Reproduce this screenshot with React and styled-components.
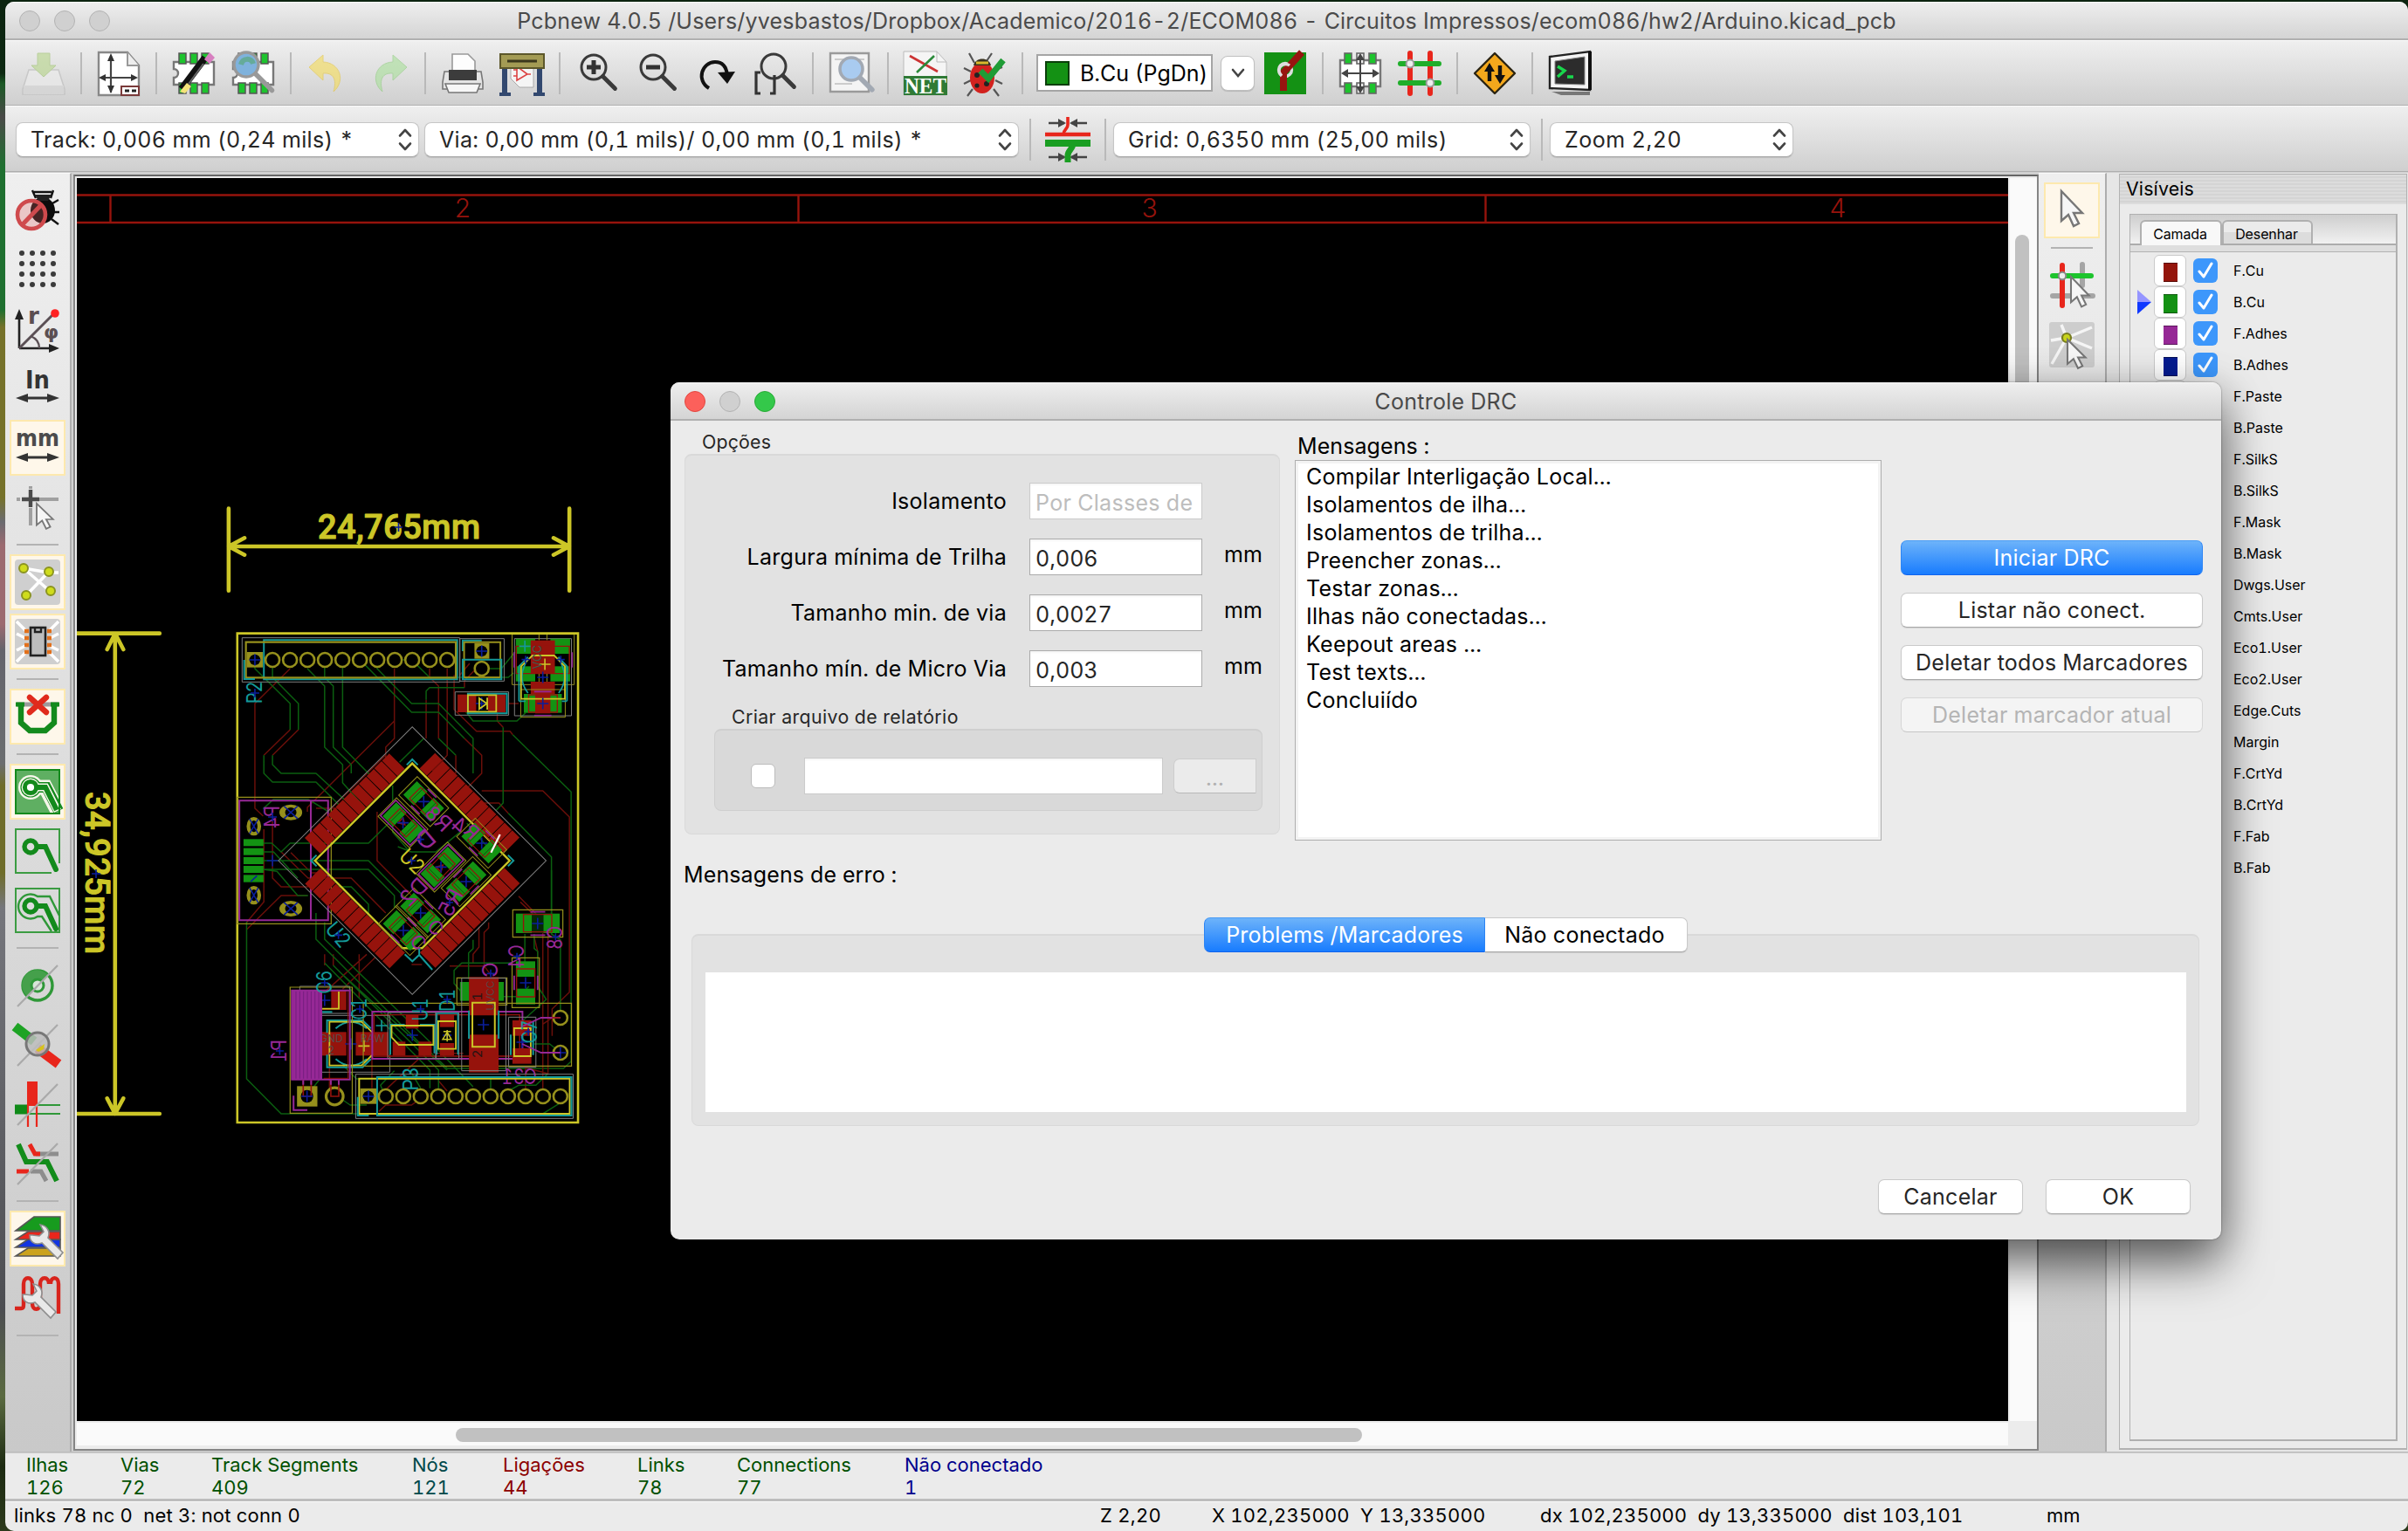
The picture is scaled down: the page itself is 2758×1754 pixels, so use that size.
import React from 'react';
import styled, { createGlobalStyle, css } from 'styled-components';

const Global = createGlobalStyle`
  * { box-sizing: border-box; }
  html, body { margin: 0; padding: 0; }
  body {
    width: 2758px; height: 1754px; overflow: hidden;
    font-family: Inter, "Liberation Sans", sans-serif;
    font-size: 25px; color: #000; white-space: pre;
    font-variant-numeric: tabular-nums;
  }
`;

/* ---------- window frame ---------- */
const Desktop = styled.div`
  width: 2758px; height: 1754px; padding: 2px 0 0 6px;
  background: linear-gradient(180deg, #0c2410 0, #0d2912 84px, #1c5a26 96px, #4a4a48 134px, #1f7030 190px,
    #1f7030 355px, #76722a 375px, #76722a 570px, #6b6b70 598px, #9c6a70 625px, #9c6a70 715px, #64646c 745px,
    #6b6e70 875px, #6f6d2a 900px, #6f6d2a 1000px, #75767c 1040px, #4d4e52 1500px, #5a6a40 1600px, #1d2b12 1680px, #2c3a1c 1754px);
`;
const Window = styled.div`
  width: 2752px; height: 1752px; display: flex; flex-direction: column;
  border-radius: 10px; overflow: hidden; background: #ebebeb;
`;
const TitleBar = styled.div`
  flex: none; height: 44px; position: relative; display: flex; align-items: center; padding: 0 16px; gap: 16px;
  background: linear-gradient(#eeeeee, #d4d4d4); border-bottom: 2px solid #b0b0b0;
  border-top: 1px solid #f7f7f7;
`;
const Light = styled.i`
  width: 24px; height: 24px; border-radius: 50%; background: ${p => p.$c || '#d0d0d0'};
  border: 1px solid ${p => p.$b || '#b2b2b2'};
`;
const WindowTitle = styled.div`
  position: absolute; left: 0; right: 0; top: 6px; text-align: center; color: #4a4a4a; letter-spacing: ${p => p.$ls}px;
  line-height: 30px;
`;

/* ---------- horizontal toolbars ---------- */
const Toolbar = styled.div`
  flex: none; height: ${p => p.$h}px; display: flex; align-items: center;
  background: linear-gradient(#efefef, #cfcfcf); border-top: 1px solid #fbfbfb; border-bottom: 1px solid #aeaeae;
  padding: ${p => p.$pad};
`;
const Slot = styled.div`
  flex: none; width: 68px; height: 68px; display: flex; align-items: center; justify-content: center;
  opacity: ${p => (p.$off ? 0.6 : 1)};
  ${p => p.$on && css`
    width: 64px; height: 64px; margin: 2px; background: #fef7ea; border: 2px solid #fde9ae;
  `}
`;
const VSep = styled.i`flex: none; width: 2px; height: 48px; margin: 0 8px; background: #b9b9b9;`;
const HSep = styled.i`flex: none; height: 2px; width: 48px; margin: 8px 0; background: #b3b3b3;`;
const Picker = styled.div`
  flex: none; width: ${p => p.$w}px; height: 40px; margin-right: ${p => p.$mr || 0}px; display: flex; align-items: center;
  justify-content: space-between; padding: 0 7px 0 16px; color: #262626; letter-spacing: ${p => p.$ls}px;
  background: #fff; border: 1px solid #c6c6c6; border-bottom-color: #a9a9a9; border-radius: 8px;
  box-shadow: 0 1px 1px rgba(0, 0, 0, 0.12);
`;
const LayerField = styled.div`
  width: 202px; height: 43px; margin: 0 9px 0 7px; background: #fff; border: 2px solid #a5a5a5;
  display: flex; align-items: center; padding-left: 8px; gap: 12px;
`;
const LayerChip = styled.i`width: 28px; height: 28px; background: #149114; border: 2px solid #0a3f0a;`;
const DropButton = styled.div`
  width: 39px; height: 40px; margin-right: 1px; background: #fff; border: 1px solid #c0c0c0; border-radius: 8px;
  display: flex; align-items: center; justify-content: center; box-shadow: 0 1px 1px rgba(0,0,0,.15);
`;

/* ---------- body ---------- */
const Body = styled.div`
  flex: none; height: 1467px; display: flex; padding-top: 1px; background: #d0d0d0; border-bottom: 1px solid #bdbdbd;
`;
const SideBar = styled.div`
  flex: none; width: ${p => p.$w}px; display: flex; flex-direction: column; align-items: center; padding-top: 8px;
  background: linear-gradient(#efefef, #c9c9c9); border-right: 2px solid #adadad; border-top: 1px solid #fafafa;
`;
const Frame = styled.div`
  flex: none; margin: 2px 0 1px 2px; width: 2251px; height: 1462px; border: 2px solid #858585; border-top-color: #666;
  padding: 2px 0 0 2px; background: #ececec; display: grid;
  grid-template-columns: 2212px 33px; grid-template-rows: 1424px 32px;
`;
const Board = styled.div`background: #000;`;
const VTrack = styled.div`background: #fafafa; border-left: 2px solid #ededed; padding: 65px 6px 0;`;
const HTrack = styled.div`
  background: #fafafa; border-top: 2px solid #ececec; border-bottom: 4px solid #ececec; padding: 6px 0 0 434px;
`;
const Thumb = styled.i`display: block; width: ${p => p.$w}px; height: ${p => p.$h}px; border-radius: 8px; background: #c1c1c1;`;

/* ---------- layers panel ---------- */
const Panel = styled.div`
  flex: none; width: 330px; margin: 1px 0 2px 14px; background: #ebebeb; border: 1px solid #b2b2b2; border-bottom: 2px solid #b2b2b2;
`;
const PanelGap = styled.div`flex: 1; display: flex; background: #e6e6e6;`;
const PanelTitle = styled.div`
  height: 34px; padding-left: 7px; line-height: 32px; font-size: 21.3px; letter-spacing: 0.17px;
  background: repeating-linear-gradient(#dcdcdc 0 2px, #d4d4d4 2px 4px);
`;
const NoteBook = styled.div`margin: 11px 10px 0 11px; height: 1406px; border: 2px solid #b0b0b0; border-width: 1px 2px 2px 1px;`;
const TabStrip = styled.div`
  height: 35px; display: flex; align-items: flex-end; padding-left: 11px;
  background: linear-gradient(#cecece, #f1f1f1); border-bottom: 2px solid #acacac;
`;
const Tab = styled.div`
  height: ${p => (p.$on ? 29 : 27)}px; width: ${p => p.$w}px; margin-bottom: ${p => (p.$on ? -2 : 0)}px; text-align: center;
  font-size: 16px; line-height: 29px; letter-spacing: -0.12px; border: 2px solid #b0b0b0; border-bottom: 0; padding-right: 2px;
  border-radius: 6px 6px 0 0; background: ${p => (p.$on ? '#f8f8f8' : 'linear-gradient(#ebebeb 50%, #dcdcdc 50%)')};
`;
const TabEdge = styled.div`height: 8px; background: #dedede; border-bottom: 1px solid #b2b2b2; margin-bottom: 3px;`;
const LayerRow = styled.div`height: 36px; display: flex; align-items: center; padding-left: 8px; font-size: 16px;`;
const Marker = styled.svg`flex: none; width: 16px; height: 28px; margin-right: 3px;`;
const Swatch = styled.div`
  flex: none; width: 37px; height: 36px; border-radius: 6px; background: #fff; border: 1px solid #cacaca;
  display: flex; align-items: center; justify-content: center; margin-right: 8px;
  &::after { content: ''; width: 16px; height: 20px; background: ${p => p.$c}; border: solid rgba(0,0,0,.4); border-width: 1px 0; margin-top: 3px; }
`;
const Tick = styled.div`
  flex: none; width: 28px; height: 28px; border-radius: 6px; background: #3d97fb; margin-right: 18px; margin-top: -1px;
  display: flex; align-items: center; justify-content: center;
`;

/* ---------- status ---------- */
const InfoPanel = styled.div`
  flex: none; height: 56px; display: flex; padding: 0 0 0 24px; font-size: 22px; line-height: 26px;
  border-top: 1px solid #c9c9c9; border-bottom: 3px solid #bdbdbd;
`;
const Stat = styled.div`width: ${p => p.$w}px; color: ${p => p.$c};`;
const StatusBar = styled.div`
  flex: none; height: 33px; display: flex; align-items: center; padding: 0 0 3px 10px; font-size: 22px; border-top: 1px solid #fafafa;
`;
const StatusCell = styled.div`width: ${p => p.$w}px; letter-spacing: ${p => p.$ls}px;`;

/* ---------- dialog ---------- */
const Dialog = styled.div`
  position: absolute; left: 768px; top: 438px; width: 1776px; height: 982px; border-radius: 10px; background: #ebebeb;
  box-shadow: 0 0 2px rgba(0,0,0,.5), 0 28px 56px rgba(0,0,0,.55), 0 8px 50px rgba(0,0,0,.2);
`;
const DialogClip = styled.div`height: 100%; border-radius: 10px; overflow: hidden;`;
const TopRow = styled.div`display: flex; padding: 12px 0 0 16px; height: 481px;`;
const Options = styled.div`width: 682px; margin-right: 17px;`;
const Caption = styled.div`height: 26px; line-height: 24px; padding-left: 20px; font-size: 21.3px; color: #262626; letter-spacing: ${p => p.$ls}px;`;
const GroupBox = styled.div`
  height: ${p => p.$h}px; border-radius: 8px; background: ${p => p.$bg}; border: 1px solid ${p => p.$line}; border-top-width: 2px;
  padding: ${p => p.$pad};
`;
const Field = styled.div`display: flex; align-items: center; height: 42px; margin-bottom: 22px;`;
const FieldLabel = styled.div`width: 368px; text-align: right; letter-spacing: 0.27px;`;
const Input = styled.div`
  flex: none; width: ${p => p.$w}px; height: 42px; background: #fff; border: 1px solid ${p => (p.$off ? '#cbcbcb' : '#ababab')};
  box-shadow: inset 0 2px 2px rgba(0,0,0,.04); margin: ${p => p.$m};
  padding: 5px 0 0 6px; line-height: 35px; overflow: hidden; color: ${p => (p.$off ? '#bdbdbd' : '#262626')}; letter-spacing: ${p => p.$ls || 0}px;
`;
const Unit = styled.div`margin-top: -7px;`;
const SubGroup = styled.div`margin: 0 19px 0 33px;`;
const Report = styled.div`display: flex; align-items: center; height: 42px;`;
const CheckBox = styled.div`width: 28px; height: 28px; border-radius: 6px; border: 1px solid #bcbcbc; background: #fff;`;
const Messages = styled.div`width: 672px; margin-right: 22px; padding-top: 2px;`;
const MessagesLabel = styled.div`height: 31px; line-height: 30px; padding-left: 3px; letter-spacing: .08px;`;
const MessageList = styled.div`
  height: 436px; background: #fff; border: 1px solid #aeaeae; box-shadow: inset 0 0 0 3px #f3f3f3;
  padding: 2px 0 0 12px; line-height: 32px; letter-spacing: 0.25px;
`;
const Actions = styled.div`width: 346px; padding-top: 125px; display: flex; flex-direction: column; gap: 20px;`;
const kinds = {
  primary: css`color: #fff; background: linear-gradient(#6db3fa, #187cfe); border-color: #4a9cf5 #2c85f5 #0f63ee;`,
  normal: css`color: #262626; background: #fff; border-color: #c9c9c9 #c9c9c9 #a8a8a8; box-shadow: 0 1px 1px rgba(0,0,0,.1);`,
  off: css`color: #b4b4b4; background: #f4f4f4; border-color: #d6d6d6 #d6d6d6 #c6c6c6;`,
  dim: css`color: #b0b0b0; background: #ebebeb; border-color: #cdcdcd #cdcdcd #b8b8b8; border-radius: 7px 0 0 7px; padding-top: 4px;`,
};
const Button = styled.div`
  flex: none; height: 40px; width: ${p => p.$w}px; border: 1px solid; border-radius: 7px; display: flex; align-items: center;
  justify-content: center; letter-spacing: 0.24px; padding-bottom: 1px; ${p => kinds[p.$k || 'normal']}
`;
const ErrorLabel = styled.div`margin: 24px 0 0 15px; height: 30px; line-height: 30px; letter-spacing: 0.12px;`;
const Segments = styled.div`position: relative; display: flex; justify-content: center; margin: 34px 0 -21px;`;
const Segment = styled(Button)`border-radius: ${p => (p.$first ? '7px 0 0 7px' : '0 7px 7px 0')}; letter-spacing: ${p => p.$ls}px;
  ${p => !p.$first && 'border-left: 0; color: #000; padding-right: 3px;'}`;
const ProblemsBox = styled(GroupBox)`margin: 0 25px 0 24px;`;
const ProblemsList = styled.div`height: 160px; background: #fff;`;
const Footer = styled.div`display: flex; justify-content: flex-end; gap: 26px; padding: 61px 35px 0 0;`;

/* ---------- icons ---------- */
const Svg = styled.svg`flex: none; width: 52px; height: 52px; display: block; overflow: visible;`;
const I = ({ children }) => <Svg viewBox="0 0 52 52" fill="none">{children}</Svg>;

const G = '#1dc42d', DG = '#138a1c', RD = '#e8261c';
const UpDown = () => (
  <svg width="16" height="26" viewBox="0 0 16 26" fill="none" stroke="#444" strokeWidth="2.6" strokeLinecap="round" strokeLinejoin="round">
    <path d="M2 8.5 8 2l6 6.5M2 17.5 8 24l6-6.5" />
  </svg>
);
const Cursor = () => (
  <path d="M0 0v34l8-7 6 13 6-3-6-12h10z" fill="#f6f6f6" stroke="#777" strokeWidth="2.4" />
);
const Chip = () => (
  <>
    <path d="M3 13h46v26H3v-8a5 5 0 0 0 0-10z" fill="#fff" stroke="#777" strokeWidth="2.4" />
    {[3, 37].map(y => [9, 22, 35].map(x => <rect key={y + '-' + x} x={x} y={y} width="8" height="12" fill={G} stroke="#555" strokeWidth="1.5" />))}
  </>
);
const Lens = ({ x, y, r, c = '#3a3a3a', fill = 'none', k = 14, w = 3 }) => (
  <g stroke={c} strokeWidth={w} strokeLinecap="round">
    <path d={`M${x + r * 0.75} ${y + r * 0.75}l${k} ${k}`} strokeWidth={w * 1.6} />
    <circle cx={x} cy={y} r={r} fill={fill} />
  </g>
);
const Wrench = () => (
  <path d="M17 22c0 8 6 12 14 9l18 18 6-7-17-17c3-7-1-14-9-15l4 8-5 5-8-1z" fill="#e9e9e9" stroke="#8d8d8d" strokeWidth="1.6" />
);
const Slash = () => <path d="M3 50 49 3" stroke="#aaa" strokeWidth="2.2" />;

const icons = {
  save: <I><path d="M9 22h34l7 22v6H2v-6z" fill="#eee" stroke="#bbb" strokeWidth="1.5" /><path d="M3 40h46v10H3z" fill="#d5d5d5" /><path d="M19 3h14v14h7L26 30 12 17h7z" fill="#b7d68a" stroke="#9cc06c" /></I>,
  page: <I><path d="M3 2h33l13 15v34H3z" fill="#fff" stroke="#888" strokeWidth="2.4" /><path d="M36 2v15h13" fill="#eee" stroke="#999" strokeWidth="2" /><path d="M17 6v42M5 31h40" stroke="#444" strokeWidth="2.2" /><path d="M17 3l-4 9h8zM17 49l-4-9h8zM3 31l8-4v8zM48 31l-8-4v8z" fill="#333" /><path d="M29 41h20v10H29z" fill="#fff" stroke="#7a3a3a" strokeWidth="2" /><path d="M33 46h5m3 0h5" stroke="#222" strokeWidth="3" /></I>,
  fpEdit: <I><Chip /><path d="M12 44 39 8" stroke="#111" strokeWidth="8" /><path d="M20 38 37 15" stroke="#666" strokeWidth="2" /><path d="M38 10l6-8 6 6-6 7z" fill="#d77fc0" /><path d="M10 47l8-10 5 4-7 8z" fill="#f4e37a" /></I>,
  fpView: <I><Chip /><Lens x={18} y={16} r={14} c="#999" fill="#7fb2dc" k={19} w={3.4} /><path d="M12 16c2-8 12-8 14-1" stroke="#5aa87c" strokeWidth="6" opacity=".7" /></I>,
  undo: <I><path d="M4 19 20 5v8c20 1 26 22 12 34 4-14 0-22-12-21v8z" fill="#f6dd58" stroke="#e6c63a" /></I>,
  redo: <I><path d="M48 19 32 5v8c-20 1-26 22-12 34-4-14 0-22 12-21v8z" fill="#a9e09a" stroke="#8dcc7c" /></I>,
  print: <I><path d="M14 4h18l8 8v16H14z" fill="#fdfdfd" stroke="#999" strokeWidth="1.6" /><path d="M5 24h42l2 12v8H3v-8z" fill="#e4e4e4" stroke="#777" strokeWidth="1.6" /><path d="M10 22h32v12H10z" fill="#3c3c3c" /><path d="M6 38h40l-4 10H10z" fill="#f7f7f7" stroke="#777" strokeWidth="1.6" /></I>,
  plot: <I><path d="M6 16v33M46 16v33" stroke="#32486f" strokeWidth="6" /><path d="M0 50h13M39 50h13" stroke="#32486f" strokeWidth="4" /><path d="M13 14h26v28H23L13 32z" fill="#f5f5f5" stroke="#aaa" /><path d="M20 18v16l12-7zM16 22h4m-4 7h4m12-2h4" stroke="#d44" strokeWidth="1.6" /><path d="M1 4h50v16H1z" fill="#a39b54" stroke="#5c572a" strokeWidth="2" /><path d="M9 12h34" stroke="#3a371c" strokeWidth="3" /></I>,
  zoomIn: <I><Lens x={22} y={19} r={14} /><path d="M14 19h16M22 11v16" stroke="#333" strokeWidth="5" /></I>,
  zoomOut: <I><Lens x={22} y={19} r={14} /><path d="M14 19h16" stroke="#333" strokeWidth="5" /></I>,
  refresh: <I><path d="M18 43C3 34 10 13 25 13c9 0 13 6 14 15" stroke="#111" strokeWidth="4" /><path d="M28 25l20-1-9 14z" fill="#111" /></I>,
  zoomFit: <I><Lens x={24} y={18} r={14} k={13} /><path d="M9 25H4v24h5M20 49h5V28" stroke="#333" strokeWidth="3.2" /></I>,
  find: <I><path d="M3 3h44v44H3z" fill="#f4f4f4" stroke="#9a9a9a" strokeWidth="2.4" /><path d="M8 10h34M8 38h20" stroke="#ccc" strokeWidth="2" /><Lens x={27} y={21} r={13} c="#a2a9b3" fill="#a9cbf0" k={14} w={3.6} /></I>,
  net: <I><path d="M1 1h38l11 12v38H1z" fill="#f5f5f5" stroke="#bbb" /><path d="M39 1v12h11" stroke="#bbb" /><path d="M8 6l32 18" stroke="#c33" strokeWidth="2.6" /><path d="M36 6 16 25" stroke="#2b8a3a" strokeWidth="2.6" /><path d="M1 29h50v22H1z" fill="#2f7a35" /><text x="26" y="49" textAnchor="middle" fontSize="26" fontWeight="700" fontFamily="Liberation Serif, serif" fill="#fff" textLength="48" lengthAdjust="spacingAndGlyphs">NET</text></I>,
  bug: <I><path d="M14 14 8 3m20 9 6-9M10 24 2 20m8 14-8 4m10 6-6 8m32-18 8 4m-10 6 6 8M38 22l8-3" stroke="#555" strokeWidth="2.2" /><ellipse cx="23" cy="31" rx="14" ry="18" fill="#d2221e" /><path d="M13 17c2-10 18-10 20 0z" fill="#3a3320" /><path d="M16 14h14" stroke="#d9b92c" strokeWidth="3" /><circle cx="17" cy="28" r="3" fill="#222" /><circle cx="28" cy="38" r="3" fill="#222" /><circle cx="17" cy="40" r="2.6" fill="#222" /><path d="M21 23l9 9L47 11" stroke="#1f9c36" strokeWidth="7" /></I>,
  layerPair: <I><rect x="2" y="2" width="48" height="48" fill="#149114" /><circle cx="26" cy="22" r="7.5" fill="#149114" stroke="#ddd" strokeWidth="3.4" /><path d="M24 46V25L45 2" stroke="#981410" strokeWidth="8" /><path d="M31 17a7.500 7.500 0 0 0-12 6c0 3 1 4 3 6" stroke="#ddd" strokeWidth="3.4" /></I>,
  fpMode: <I><path d="M3 11h46v30H3z" fill="#fff" stroke="#777" strokeWidth="2.4" />{[[8, 3], [22, 3], [36, 3], [8, 37], [22, 37], [36, 37]].map(([x, y]) => <rect key={x + '-' + y} x={x} y={y} width="8" height="12" fill={x === 22 ? '#eee' : G} stroke="#666" strokeWidth="1.6" />)}<path d="M26 8v36M7 26h38" stroke="#444" strokeWidth="2" /><path d="M26 3l-5 8h10zM26 49l-5-8h10zM4 26l8-5v10zM48 26l-8-5v10z" fill="#444" /></I>,
  trackMode: <I><path d="M15 3v46M38 3v46" stroke={RD} strokeWidth="6" strokeLinecap="round" /><path d="M4 15h44M4 37h44" stroke="#1fae2a" strokeWidth="6" strokeLinecap="round" /><circle cx="15" cy="15" r="4.4" fill="#eee" stroke="#999" strokeWidth="2" /><circle cx="38" cy="37" r="4.4" fill="#eee" stroke="#999" strokeWidth="2" /></I>,
  freeroute: <I><path d="M26 3 49 26 26 49 3 26z" fill="#f4a81c" stroke="#2a2413" strokeWidth="2.4" strokeLinejoin="round" /><path d="M20 35V22m12-5v13" stroke="#111" strokeWidth="4.4" /><path d="M20 14l-6 10h12zM32 38l-6-10h12z" fill="#111" /></I>,
  script: <I><path d="M3 7 49 1v44L3 43z" fill="#f4f4f4" stroke="#222" strokeWidth="2.4" /><path d="M49 1v44" stroke="#111" strokeWidth="4" /><path d="M9 12l34-5v32L9 38z" fill="#2c2c2c" stroke="#888" /><path d="M12 18l8 5-8 7m11 0h7" stroke="#19d64c" strokeWidth="3.4" /><path d="M5 47h44v4H16z" fill="#777" /></I>,
  trackAuto: <I><path d="M4 7h18m8 0h18M4 46h18m8 0h18" stroke="#444" strokeWidth="2.4" /><path d="M24 7l-9-5v10zM28 7l9-5v10zM24 46l-9-5v10zM28 46l9-5v10z" fill="#444" /><path d="M26 0v9c0 5-5 5-5 11" stroke={RD} strokeWidth="3.6" /><path d="M0 20h52" stroke={RD} strokeWidth="4.4" /><path d="M0 30h52" stroke="#1a9e22" strokeWidth="8" /><path d="M32 30c0 7-6 8-6 14v8" stroke="#1a9e22" strokeWidth="7" /></I>,
  drcOff: <I><path d="M24 12 20 3m21 9 3-9M43 18l7-4M45 28h6m-9 8 8 6M22 5h20" stroke="#111" strokeWidth="2.4" /><ellipse cx="32" cy="26" rx="14" ry="15" fill="#0c0c0c" /><path d="M23 8h19l-4 7H27z" fill="#222" /><circle cx="19" cy="31" r="16" fill="rgba(225,100,100,.28)" stroke="#cf4a4d" strokeWidth="4.6" /><path d="M8 43 30 20" stroke="#cf4a4d" strokeWidth="5" /></I>,
  grid: <I>{[7, 19, 31, 43].map(y => [8, 20, 32, 44].map(x => <circle key={x + '-' + y} cx={x} cy={y} r="3" fill="#3b3b3b" />))}</I>,
  polar: <I><path d="M5 48V10M5 48h40" stroke="#222" strokeWidth="2.6" /><path d="M5 3l-5 12h10zM51 48l-12-5v10z" fill="#222" /><path d="M5 48 45 8" stroke="#5b5055" strokeWidth="3" /><circle cx="46" cy="8" r="4.8" fill="#f22" /><path d="M18 34q10 4 10 14" stroke="#5b5055" strokeWidth="2.4" /><text x="15" y="20" fontFamily="DejaVu Sans, sans-serif" fontWeight="700" fontSize="26" fill="#5b4f52">r</text><text x="33" y="37" fontFamily="DejaVu Sans, sans-serif" fontWeight="700" fontSize="22" fill="#5b4f52">φ</text></I>,
  inch: <I><text x="26" y="26" textAnchor="middle" fontFamily="DejaVu Sans, sans-serif" fontWeight="700" fontSize="28" fill="#333" textLength="28" lengthAdjust="spacingAndGlyphs">In</text><path d="M8 37h36" stroke="#333" strokeWidth="2.8" /><path d="M1 37l14-5v10zM51 37l-14-5v10z" fill="#333" /></I>,
  mm: <I><text x="26" y="24" textAnchor="middle" fontFamily="DejaVu Sans, sans-serif" fontWeight="700" fontSize="27" fill="#4b4b4b" textLength="50" lengthAdjust="spacingAndGlyphs">mm</text><path d="M8 37h36" stroke="#333" strokeWidth="2.8" /><path d="M1 37l14-5v10zM51 37l-14-5v10z" fill="#333" /></I>,
  cursorShape: <I><path d="M2 17h4m22 0h22M18 2v3m0 22v20" stroke="#a0a0a0" strokeWidth="4" /><path d="M8 17h20M18 6v20" stroke="#4b4b4b" strokeWidth="4.4" /><g transform="translate(25 22) scale(.78 .72)"><Cursor /></g></I>,
  ratsnest: <I><rect width="52" height="52" rx="4" fill="#cfcfcf" /><path d="M10 10l29 5h11M13 41l26-27M10 10l31 27" stroke="#fff" strokeWidth="3.6" />{[[10, 10], [39, 14], [13, 41], [41, 36]].map(([x, y]) => <circle key={x} cx={x} cy={y} r="5" fill="#cfdc1c" stroke="#8b9420" strokeWidth="2" />)}</I>,
  fpRatsnest: <I><rect width="52" height="52" rx="4" fill="#cfcfcf" /><path d="M2 3l11 11M2 17l10 5M2 36l10-5M2 49l11-11M50 3 39 14M50 17l-10 5M50 36l-10-5M50 49 39 38" stroke="#fff" strokeWidth="3.6" />{[14, 22, 30, 38].map(y => <path key={y} d={`M11 ${y}h5M37 ${y}h5`} stroke="#e2701c" strokeWidth="4.4" />)}<rect x="18" y="10" width="17" height="32" fill="#bdbdbd" stroke="#222" strokeWidth="2.6" /><path d="M23 11v4h7v-4" stroke="#222" strokeWidth="2.4" /></I>,
  autoDel: <I><path d="M2 12h48" stroke="#9c9c9c" strokeWidth="5" /><path d="M7 11v22l10 9h18l10-9V11" stroke={DG} strokeWidth="6.4" /><path d="M1 12h10M41 12h10" stroke={DG} strokeWidth="5" /><path d="M17 4l19 17M36 4 17 21" stroke="#e02a1c" strokeWidth="6.4" strokeLinecap="round" /></I>,
  zoneFill: <I><rect width="52" height="52" fill="#5faf62" /><path d="M18 21h17l14 27" stroke="#f6f6ea" strokeWidth="17" /><circle cx="18" cy="21" r="14" fill="#f6f6ea" /><path d="M18 21h18l14 27" stroke={DG} strokeWidth="12" /><circle cx="18" cy="21" r="11.6" fill={DG} /><path d="M18 21h17l14 27" stroke="#f6f6ea" strokeWidth="9" /><circle cx="18" cy="21" r="10.4" fill="#f6f6ea" /><path d="M18 21h17l13 26" stroke={DG} strokeWidth="6" /><circle cx="18" cy="21" r="6.6" fill="#fff" stroke={DG} strokeWidth="5" /><rect x="1" y="1" width="50" height="50" stroke={DG} strokeWidth="2" /></I>,
  zoneNone: <I><path d="M42 51H1V1h50v39" stroke="#3b9c42" strokeWidth="2" /><path d="M18 21h17l12 26" stroke={DG} strokeWidth="6" strokeLinecap="round" /><circle cx="18" cy="21" r="7" fill="#ddd" stroke={DG} strokeWidth="5.4" /></I>,
  zoneOutline: <I><rect x="1" y="1" width="50" height="50" stroke="#3b9c42" strokeWidth="2" /><path d="M42 50 31 33h-5A14 14 0 1 1 26 10h14l11 22" stroke="#2f9838" strokeWidth="2.4" /><path d="M18 21h17l12 26" stroke={DG} strokeWidth="6" strokeLinecap="round" /><circle cx="18" cy="21" r="7" fill="#ddd" stroke={DG} strokeWidth="5.4" /></I>,
  padSketch: <I><circle cx="26" cy="26" r="17" stroke="#2f9838" strokeWidth="3.4" /><path d="M14 38A17 17 0 1 1 38 14L31 21a7 7 0 0 0-10 10z" fill="#45a04b" /><circle cx="26" cy="26" r="7" fill="#d8e6d8" stroke="#2f9838" strokeWidth="3" /><Slash /></I>,
  viaSketch: <I><path d="M0 5 22 22" stroke="#1da324" strokeWidth="11" /><path d="M26 30l24 18" stroke={RD} strokeWidth="11" /><Slash /><circle cx="26" cy="25" r="13" fill="#bdbdbd" fillOpacity=".85" stroke="#777" strokeWidth="3" /><path d="M24 32l10-7-1 6-6 3z" fill="#d8c31a" /></I>,
  trackSketch: <I><path d="M0 32h16" stroke="#0f8a18" strokeWidth="11" /><path d="M14 27h38M14 37h38" stroke="#2f9838" strokeWidth="2" /><path d="M20 0v28" stroke={RD} strokeWidth="12" /><path d="M15 26v26M25 26v26" stroke={RD} strokeWidth="2.2" /><Slash /></I>,
  contrast: <I><path d="M50 15H24" stroke="#8d8d8d" strokeWidth="5" /><path d="M2 35h14" stroke={RD} strokeWidth="5" /><path d="M18 35h12l6 11" stroke="#8d8d8d" strokeWidth="5" /><path d="M17 4l6 11h6" stroke={RD} strokeWidth="5" /><path d="M4 4l9 20h24l11 22" stroke="#128c1b" strokeWidth="6" /><Slash /></I>,
  layers: <I><path d="M1 46l14-9h37v9z" fill="#cba21d" stroke="#555" strokeWidth="1.6" /><path d="M1 36l14-9h37v9z" fill="#1235e0" stroke="#555" strokeWidth="1.6" /><path d="M1 27l14-9h37v9z" fill={RD} stroke="#555" strokeWidth="1.6" /><path d="M1 17 22 1h30v16z" fill="#179b1e" stroke="#555" strokeWidth="1.6" /><Wrench /></I>,
  microwave: <I><path d="M0 38h7c3 0 3-2 3-5V10c0-9 10-9 10 0v22c0 9 9 9 9 0V10c0-9 10-9 10 0m2 0c0-9 9-9 9 0v34" stroke="#d8241c" strokeWidth="4.4" /><g transform="translate(-8 0)"><Wrench /></g></I>,
  arrow: <I><g transform="translate(14 4)"><Cursor /></g></I>,
  highlight: <I><path d="M38 2v24M4 38h46" stroke="#a5a5a5" strokeWidth="6" strokeLinecap="round" /><path d="M15 3v46" stroke={RD} strokeWidth="6" strokeLinecap="round" /><path d="M4 15h44" stroke={G} strokeWidth="6" strokeLinecap="round" /><circle cx="15" cy="15" r="4.2" fill="#eee" stroke="#888" strokeWidth="2" /><g transform="translate(25 16) scale(.86)"><Cursor /></g></I>,
  localRats: <I><rect width="52" height="52" rx="3" fill="#cdcdcd" /><path d="M20 18 3 48M20 18 49 6M20 18 14 3M20 18 2 21M20 18l29 12" stroke="#f5f5f5" strokeWidth="3.4" /><circle cx="20" cy="18" r="5" fill="#c8d41c" stroke="#777c20" strokeWidth="2.2" /><g transform="translate(21 20) scale(.86 .82)"><Cursor /></g></I>,
};

const mainTools = ['save', '|', 'page', '|', 'fpEdit', 'fpView', '|', 'undo', 'redo', '|', 'print', 'plot', '|', 'zoomIn', 'zoomOut', 'refresh', 'zoomFit', '|', 'find', '|', 'net', 'bug', '|'];
const modeTools = ['layerPair', '|', 'fpMode', 'trackMode', '|', 'freeroute', '|', 'script'];
const leftTools = ['drcOff', 'grid', 'polar', 'inch', '*mm', 'cursorShape', '|', '*ratsnest', '*fpRatsnest', '|', '*autoDel', '|', '*zoneFill', 'zoneNone', 'zoneOutline', '|', 'padSketch', 'viaSketch', 'trackSketch', 'contrast', '|', '*layers', 'microwave', '|'];
const rightTools = ['*arrow', '|', 'highlight', 'localRats'];

const Tools = ({ list, vertical }) => list.map((t, i) => {
  if (t === '|') return vertical ? <HSep key={i} /> : <VSep key={i} />;
  const on = t[0] === '*';
  const name = on ? t.slice(1) : t;
  return <Slot key={i} $on={on} $off={['save', 'undo', 'redo'].includes(name)}>{icons[name]}</Slot>;
});

/* ---------- board drawing ---------- */
const Y = '#ccc627', OL = '#96901c', CR = '#96130c', CG = '#139313', CY = '#149a9a', MG = '#962896', BL = '#0a1e9c', GY = '#7e7e7e', TG = '#0b5f10', TR = '#6a0f0a';
const BoardSvg = styled.svg`
  display: block; width: 2212px; height: 1424px; font-family: Inter, sans-serif; fill: none;
  .px * { vector-effect: non-scaling-stroke; }
`;
const SX = 2.529, SY = 3;
const R = ({ b, f = 'none', s, w = 1.4, o }) => <rect x={b[0]} y={b[1]} width={b[2] - b[0]} height={b[3] - b[1]} fill={f} stroke={s} strokeWidth={s ? w : 0} opacity={o} />;
const Ring = ({ x, y, r = 8, w = 2.6, c = OL }) => <ellipse cx={x} cy={y} rx={r * SX} ry={r * SY} stroke={c} strokeWidth={w} fill="#000" />;
const SqPad = ({ b }) => <><R b={b} f={OL} /><ellipse cx={(b[0] + b[2]) / 2} cy={(b[1] + b[3]) / 2} rx={6.2 * SX} ry={6.2 * SY} fill="#000" /></>;
const Cross = ({ x, y, c = BL, r = 6.5, w = 1.6 }) => <path d={`M${x - r * SX} ${y}h${2 * r * SX}M${x} ${y - r * SY}v${2 * r * SY}`} stroke={c} strokeWidth={w} />;
const Ref = ({ x, y, t, c = MG, r = 0, z = 24, flip, len, o }) => (
  <text transform={`translate(${x} ${y}) scale(${SX} ${SY}) rotate(${r}) scale(${flip ? -1 : 1} 1)`} textAnchor="middle" y={z * 0.36}
    fontSize={z} fill={c} opacity={o} textLength={len} lengthAdjust="spacingAndGlyphs">{t}</text>
);
const Hole = ({ x, y, rx, ry }) => (
  <><ellipse cx={x} cy={y} rx={rx} ry={ry} fill={OL} /><ellipse cx={x} cy={y} rx={rx * 0.5} ry={ry * 0.62} fill="#000" />
    <path d={`M${x - rx * 0.6} ${y - ry * 0.8}L${x + rx * 0.6} ${y + ry * 0.8}M${x + rx * 0.6} ${y - ry * 0.8}L${x - rx * 0.6} ${y + ry * 0.8}`} stroke={BL} strokeWidth="1.6" /></>
);
/* 0805 footprint lying across the microcontroller */
const Small = ({ x, y, a, diode }) => (
  <g transform={`translate(${80 + x / SX} ${560 + y / SY}) rotate(${a})`}>
    <rect x="-25.5" y="-15" width="51" height="30" stroke={OL} strokeWidth="1" />
    {diode && <rect x="-24" y="-12.5" width="48" height="25" stroke={MG} strokeWidth="1.6" />}
    <rect x="-22" y="-11" width="17" height="22" fill={CG} /><rect x="5" y="-11" width="17" height="22" fill={CG} />
    <path d="M-11-11v22M11-11v22" stroke="#000" strokeWidth=".8" opacity=".5" />
    <rect x="-14" y="-9" width="28" height="18" stroke={CR} strokeWidth="1.2" />
    {!diode && <path d="M-7-13.5H7M-7 13.5H7" stroke={MG} strokeWidth="1.6" />}
    {diode && <path d="M-4-4v8l7-4z" stroke={CR} strokeWidth="1.6" />}
    <path d="M-4.6-4.6 4.6 4.6M4.6-4.6-4.6 4.6" stroke={BL} strokeWidth="1.6" />
  </g>
);
const row11 = [0, 1, 2, 3, 4, 5, 6, 7, 8, 9, 10];

const greenA = 'M536 600V618L638 738V828M562 916V978L587 1008H713L800 1110M587 610V648L662 738V828M587 916V948L612 978H713L820 1095M688 618L738 678V888L790 948V1010L850 1090M738 600V648L763 678V888L815 948V978M790 600V888L900 1020M855 605L990 768H1068L1143 858M890 600V618L990 738H1068L1168 858V978M965 588H1005V605L1042 648H1270L1285 633M1068 858L1118 916M1143 683H1042L1032 695V725M1025 858L955 940M1283 845L1452 1042V1968L1430 1992H1093L1043 1935M1130 740L1168 798H1295L1320 770M1255 820V1080L1235 1105M1193 618H1250L1290 560M1270 1115L1395 1265V1530L1421 1550V1800M560 1100 590 1067H690L750 1110M935 1020V1075';
const redA = 'M638 828L562 916M662 828L587 916M1042 618V648L1068 678V858M1118 916V978M1143 858L1193 916V978L1150 1030M1093 618V916L1050 970M940 618V858L915 888V930M940 798L840 916L688 1095V1110M638 618L536 738V1098L560 1125M1158 600L1130 640M1143 683V660L1175 620M1032 725V858M1113 640V758L1178 833H1275L1283 845M1238 760V798L1255 820M1270 738H1300M1193 1038H1370L1447 1128V1730L1397 1788V1880M1200 1080H1243L1270 1115M915 915L730 1130M713 1098H790';
const greenB = 'M560 108H585L612 138L638 108H865L940 20M560 168H865L990 318M560 198H865L940 288V330M560 138H590L660 228M763 258H815L865 318V350M560 198 600 205 660 288H690M512 378V918L612 1038H835M713 348V438L1043 830M738 380V438L1068 820L1168 945M738 520L1043 888V950M763 528L1068 888V950M790 560L1093 888M1395 200V420M1345 420V470L1355 480V600L1380 645L1310 720M1168 440V470L1155 485V575M1280 520H1135L1113 545V590L1135 620M1318 420V520M1219 950V915M1270 960L1300 940H1350L1385 900M1421 1000L1370 1038M790 990L812 1008H860M687 975L730 910M1220 135 1150 40M950 120 990 138H1060L1130 70M1345 798H1390L1421 828M790 870 830 918H940M915 985 900 940 940 890M985 888 1016 950M935 20V70L985 138M1255 635H1300L1330 600';
const redB = 'M587 30V228L612 258H690M612 138L690 228H815L915 348M687 288H612L512 405M562 60V310L512 380M860 490L738 620M885 500L790 610M763 528V490M738 528V490M890 0V168L990 288M1300 290L1370 375V950M1305 310L1385 400V900L1320 880V950M1213 380V400L1200 415V530L1219 560M1185 395V465L1168 490V520M875 840V950M915 955L1010 850M1093 960L1068 925V905M895 1030L915 1008H990L1016 985M752 860V960M838 490V640M990 525H1020M640 140 700 210H730M1100 530H1200M1345 430 1355 480V590M1140 830H1060M1421 708H1397L1370 730';

const BoardDrawing = () => (
  <BoardSvg viewBox="88 204 2212 1424">
    <path d="M88 223.500H2300M88 255H2300M126.500 224v31M914.500 224v31M1701.500 224v31" stroke="#96130c" strokeWidth="2.4" />
    <g fill="#96130c" fontSize="30" fontWeight="300" textAnchor="middle"><text x="530" y="249">2</text><text x="1317" y="249">3</text><text x="2105" y="249">4</text></g>
    <g className="px" transform={`translate(80 560) scale(${1 / SX} ${1 / SY})`}>
      <g strokeWidth="1.5" strokeLinejoin="round">
        <path d={redA} stroke={TR} /><path d={greenA} stroke={TG} />
        <g transform="translate(0 1110)"><path d={redB} stroke={TR} /><path d={greenB} stroke={TG} /></g>
      </g>
      {/* header P2 */}
      <R b={[499, 512, 1129, 664]} s={GY} w={1} /><R b={[562, 520, 1122, 655]} s={CY} w={2} /><R b={[510, 527, 1118, 649]} s={OL} w={2.2} />
      <path d="M505 588V654H536M1138 558V521H1193" stroke={CY} strokeWidth="2" />
      <SqPad b={[513, 561, 559, 614]} />{row11.map(i => <Ring key={i} x={587 + i * 50.6} y={588} />)}<Cross x={536} y={588} />
      <Ref x={534} y={700} t="P2" c={CY} r={-90} len={26} /><Cross x={536} y={702} r={5} />
      <R b={[1130, 515, 1258, 661]} s={GY} w={1} /><R b={[1142, 527, 1247, 648]} s={OL} w={2} /><R b={[1138, 587, 1250, 655]} s={CY} w={2} />
      <SqPad b={[1172, 531, 1215, 584]} /><Cross x={1193} y={558} /><Ring x={1193} y={618} />
      {/* LED */}
      <R b={[1116, 698, 1271, 778]} s={GY} w={1} /><R b={[1123, 707, 1262, 768]} f={CR} /><R b={[1177, 712, 1211, 765]} f="#000" /><R b={[1153, 704, 1266, 772]} s={CY} w={2} />
      <R b={[1153, 709, 1235, 766]} s={Y} w={1.8} /><Cross x={1193} y={738} r={7} /><path d="M1186 720V757L1208 738ZM1209 718V759" stroke={Y} strokeWidth="1.8" />
      {/* regulator corner */}
      <R b={[1281, 500, 1461, 673]} s={OL} w={1} /><R b={[1288, 515, 1453, 780]} s={GY} w={1} />
      <R b={[1292, 515, 1348, 567]} f={CG} /><R b={[1392, 515, 1449, 567]} f={CG} /><R b={[1292, 610, 1348, 662]} f={CG} /><R b={[1392, 610, 1449, 662]} f={CG} />
      <R b={[1335, 521, 1405, 635]} f={CR} /><R b={[1335, 663, 1405, 705]} f={CR} /><R b={[1293, 541, 1447, 635]} s={CR} w={1.4} />
      <path d="M1359 500V520M1382 500V520M1359 636V663M1382 636V663" stroke={OL} /><path d="M1287 562V614M1455 562V614M1345 697H1395" stroke={MG} strokeWidth="1.6" />
      <R b={[1315, 705, 1425, 770]} f={CG} /><R b={[1348, 705, 1392, 772]} f={CR} /><R b={[1329, 708, 1412, 768]} s={CR} /><R b={[1306, 690, 1435, 785]} s={OL} w={1} /><path d="M1345 779H1395" stroke={MG} strokeWidth="1.6" />
      <path d="M1301 730V610L1327 578M1440 730V610L1415 578M1301 730H1320M1440 730H1425M1327 702Q1292 648 1327 585M1416 702Q1450 648 1416 585" stroke={CY} strokeWidth="1.8" />
      <path d="M1307 722V610L1340 573H1403L1434 610V722Z" stroke={Y} strokeWidth="1.8" />
      <Cross x={1320} y={587} r={4.5} /><Cross x={1422} y={587} r={4.5} /><Cross x={1370} y={648} /><Cross x={1370} y={738} /><Cross x={1376} y={603} c={Y} /><Cross x={1318} y={541} c={CY} />
      <Ref x={1354} y={578} t="VCC" c="#3c5a4c" r={-90} z={13} />
      {/* board edge */}
      <R b={[485, 497, 1472, 2178]} s={Y} w={2.6} />
      {/* USB connector */}
      <R b={[485, 1060, 757, 1495]} s={OL} w={1.2} />
      <g transform="translate(0 1110)">
        {[[94, 118], [125, 149], [156, 180], [186, 210], [217, 242]].map(([a, b]) => <R key={a} b={[503, a, 561, b]} f={CG} />)}
        <path d="M524 240 542 220" stroke={BL} strokeWidth="1.6" /><Cross x={587} y={168} />
        <Hole x={640} y={2} rx={33} ry={27} /><Hole x={640} y={333} rx={33} ry={27} /><Hole x={533} y={50} rx={21} ry={32} /><Hole x={533} y={287} rx={21} ry={32} />
      </g>
      <R b={[491, 1072, 748, 1483]} s={MG} w={2} /><path d="M698 1072V1483" stroke={MG} strokeWidth="2" />
      <Ref x={585} y={1128} t="P4" r={-90} flip len={26} /><Cross x={587} y={1128} r={5} />
    </g>

    {/* microcontroller */}
    <g transform="translate(472.2 986) rotate(45)">
      {[0, 90, 180, 270].map(a => <g key={a} transform={`rotate(${a})`}>{row11.map(i => <rect key={i} x={-68.7 + i * 12.52} y="-105.5" width="11.7" height="25" fill={CR} />)}</g>)}
      <rect x="-108.4" y="-108.4" width="216.8" height="216.8" stroke={GY} strokeWidth="1" />
      <path d="M-82-73V-82H-73M73-82H82V-73M-82 73V82H-73" stroke={CY} strokeWidth="2" />
      <path d="M-78.8-78.8H78.8V63L63 78.8H-78.8Z" stroke={Y} strokeWidth="2.4" />
    </g>
    <Small x={1025} y={1075} a={45} /><Small x={965} y={1148} a={45} diode /><Small x={1193} y={1218} a={45} /><Small x={1075} y={1300} a={-45} diode />
    <Small x={1148} y={1350} a={-45} /><Small x={1016} y={1458} a={45} /><Small x={966} y={1518} a={45} />

    <g className="px" transform={`translate(80 930) scale(${1 / SX} ${1 / SY})`}>
      <Ref x={1083} y={38} t="R" r={45} flip z={25} /><Ref x={1052} y={6} t="8" r={45} z={23} flip /><Ref x={1128} y={47} t="4" r={45} z={24} flip /><Ref x={1165} y={68} t="R" r={45} z={22} flip />
      <Ref x={1030} y={95} t="D" r={-40} z={28} flip /><Ref x={995} y={275} t="D2" r={-45} z={25} flip /><Ref x={1102} y={312} t="R5" r={-62} z={25} flip /><Ref x={1060} y={398} t="C" r={45} z={22} /><Ref x={1010} y={448} t="C" r={45} z={22} />
      <Ref x={992} y={170} t="U2" c={Y} r={45} len={30} /><Ref x={778} y={422} t="U2" c={CY} r={50} len={30} />
      <Cross x={990} y={168} r={4.5} /><Cross x={778} y={424} r={4.5} /><Cross x={1016} y={95} r={4} /><Cross x={1100} y={312} r={4} />
      <path d="M970 490 992 514 1012 492 1050 543M1012 492V470" stroke={CY} strokeWidth="2" />
      <path d="M1246 78 1220 140" stroke="#fff" strokeWidth="2.2" />
      {/* C8 and C4 */}
      <R b={[1292, 350, 1419, 417]} f={CG} /><R b={[1338, 350, 1372, 417]} f="#052a05" /><R b={[1314, 353, 1396, 413]} s={CR} /><R b={[1283, 337, 1428, 431]} s={OL} w={1.2} /><path d="M1334 344H1377M1334 424H1377" stroke={MG} strokeWidth="1.8" /><Cross x={1355} y={384} />
      <Ref x={1404} y={433} t="C8" r={-90} flip len={27} /><Cross x={1407} y={430} r={4} />
      <R b={[1292, 514, 1348, 567]} f={CG} /><R b={[1292, 608, 1348, 662]} f={CG} /><R b={[1294, 540, 1347, 636]} s={CR} /><R b={[1281, 502, 1360, 673]} s={OL} w={1.2} /><path d="M1287 563V613M1355 563V613" stroke={MG} strokeWidth="1.8" /><Cross x={1320} y={588} />
      <Ref x={1293} y={497} t="C4" r={-90} flip len={27} /><Cross x={1295} y={497} r={4} />
      {/* P1 battery connector */}
      <R b={[666, 600, 811, 693]} s={GY} w={1} /><R b={[690, 614, 801, 681]} f={CR} /><R b={[731, 618, 757, 676]} f="#000" /><path d="M731 677H779V618" stroke={Y} strokeWidth="1.8" /><path d="M731 688H760" stroke={CY} strokeWidth="2" /><Cross x={738} y={648} />
      <R b={[701, 700, 927, 895]} s={GY} w={1} /><R b={[690, 757, 801, 838]} f={CR} /><R b={[828, 757, 923, 838]} f={CR} />
      <path d="M745 760V717H848L872 745M745 835V878H848L872 850M770 745Q814 700 860 745M770 850Q814 895 860 850" stroke={CY} strokeWidth="2" />
      <path d="M875 757 845 722H752V872H845L875 837" stroke={Y} strokeWidth="1.8" />
      <Ref x={757} y={780} t="GND" c="#574b4b" z={12} /><Ref x={876} y={780} t="RAW" c="#574b4b" z={12} /><Ref x={757} y={820} t="2" c="#574b4b" z={13} />
      <Cross x={814} y={798} /><Cross x={852} y={805} c={Y} /><Cross x={903} y={735} c={CY} />
      <R b={[645, 614, 731, 920]} f={MG} />{[655, 666, 677, 688, 699, 710, 721].map(x => <path key={x} d={`M${x} 616V918`} stroke="#6c1a78" strokeWidth=".8" />)}
      <R b={[643, 614, 811, 920]} s={MG} w={2} /><path d="M806 618V916H735" stroke={CR} />
      <R b={[638, 603, 818, 1036]} s={OL} w={1.2} />
      <R b={[658, 943, 717, 1013]} f={OL} /><ellipse cx="687" cy="978" rx="18" ry="22" fill="#000" /><Ring x={767} y={978} r={9.8} w={3.2} />
      <path d="M676 922V978H699V922M756 922V978H779V922" stroke={CR} strokeWidth="1.6" /><path d="M676 922V938M699 922V938M756 922V938M779 922V938M648 976V1025H688" stroke={MG} strokeWidth="2" /><Cross x={687} y={978} />
      <Ref x={606} y={822} t="P1" r={-90} flip len={26} /><Cross x={608} y={822} r={4.5} />
      <Ref x={738} y={586} t="C6" c={CY} r={-90} len={27} /><Cross x={738} y={588} r={4} />
      {/* power section */}
      <R b={[850, 658, 1453, 874]} s={OL} w={1.2} /><R b={[881, 698, 1303, 840]} s={CR} /><R b={[876, 687, 1311, 849]} s={MG} w={2} />
      <R b={[921, 690, 1060, 848]} s={GY} w={1} /><R b={[973, 698, 1010, 745]} f={CR} /><R b={[935, 790, 972, 838]} f={CR} /><R b={[1010, 790, 1048, 838]} f={CR} />
      <path d="M928 835V732H970M1014 732H1056V830" stroke={CY} strokeWidth="2" /><path d="M932 775V735H1053V801H953Z" stroke={Y} strokeWidth="1.8" /><Cross x={992} y={768} />
      <R b={[1060, 690, 1127, 848]} s={GY} w={1} /><R b={[1072, 698, 1113, 740]} f={CR} /><R b={[1072, 795, 1113, 838]} f={CR} /><path d="M1063 835V693H1124V835" stroke={CY} strokeWidth="1.6" /><R b={[1067, 720, 1118, 815]} s={Y} w={1.8} /><Cross x={1093} y={768} r={5} /><path d="M1080 782H1105L1093 758ZM1082 755H1104M1093 750V790" stroke={Y} strokeWidth="1.5" />
      <R b={[1130, 585, 1257, 650]} f={CG} /><R b={[1121, 571, 1266, 664]} s={OL} w={1.2} /><R b={[1156, 568, 1242, 698]} f={CR} /><R b={[1156, 766, 1242, 896]} f={CR} /><R b={[1135, 572, 1263, 890]} s={GY} w={1} />
      <path d="M1156 683V780M1242 683V780" stroke={CY} strokeWidth="2" /><R b={[1166, 656, 1231, 808]} s={Y} w={2} /><Cross x={1198} y={732} />
      <Ref x={1217} y={632} t="UVCC" c="#5c4444" r={-90} z={12} /><Ref x={1180} y={635} t="1" c="#2a1414" r={-90} z={15} /><Ref x={1180} y={832} t="2" c="#2a1414" r={-90} z={15} />
      <Ref x={1217} y={543} t="C" r={-90} flip z={24} /><Cross x={1219} y={556} r={4.5} />
      <R b={[1271, 706, 1350, 878]} s={GY} w={1} /><R b={[1282, 717, 1337, 770]} f={CR} /><R b={[1282, 813, 1337, 866]} f={CR} /><path d="M1277 766V836M1342 720V836" stroke={CY} strokeWidth="2" /><R b={[1287, 744, 1335, 840]} s={Y} w={1.8} /><Cross x={1310} y={792} />
      <Ref x={1330} y={756} t="C7" c={CY} r={-90} len={27} /><Ref x={838} y={678} t="C1" c={CY} r={-90} len={25} /><Ref x={1016} y={680} t="U1" c={CY} r={-90} len={26} /><Ref x={1093} y={648} t="D1" c={CY} r={-90} len={26} /><Ref x={988} y={918} t="P3" c={CY} r={-90} len={27} />
      <Cross x={840} y={678} r={4.5} /><Cross x={1016} y={678} r={4.5} /><Cross x={1093} y={645} r={4.5} /><Cross x={1328} y={756} r={4.5} />
      <Ring x={1421} y={708} /><Ring x={1421} y={828} /><Cross x={1421} y={828} /><path d="M1421 708H1365L1310 738M1421 828H1365L1310 798" stroke={MG} strokeWidth="1.8" /><path d="M1397 708H1421" stroke={CR} strokeWidth="1.6" />
      <Ref x={1302} y={909} t="C31" flip len={40} />
      {/* header P3 */}
      <R b={[828, 902, 1458, 1054]} s={GY} w={1} /><R b={[838, 917, 1448, 1038]} s={Y} w={2} /><R b={[890, 912, 1453, 1044]} s={CY} w={2} /><path d="M834 980V1044H866" stroke={CY} strokeWidth="2" />
      <SqPad b={[841, 951, 888, 1004]} /><Cross x={865} y={978} />{row11.map(i => <Ring key={i} x={915 + i * 50.6} y={978} />)}
    </g>

    {/* dimensions */}
    <g className="px" transform={`translate(80 560) scale(${1 / SX} ${1 / SY})`} stroke={Y} strokeWidth="4.6" strokeLinecap="round" strokeLinejoin="round">
      <path d="M460 68V350M1447 68V350M460 198H1447M506 169 460 198 506 227M1401 169 1447 198 1401 227" />
      <path d="M20 497H260M20 2148H260M131 497V2148M108 552 131 497 155 552M108 2095 131 2148 155 2095" />
    </g>
    <g fill={Y} stroke={Y} strokeWidth="1.1" strokeLinejoin="round" fontSize="38" fontWeight="500" fontFamily="Roboto, sans-serif">
      <text x="364" y="617" textLength="186">24,765mm</text>
      <text transform="translate(98 907) rotate(90)" textLength="186">34,925mm</text>
    </g>
    <path d="M452 604h9m-4.5-5v10M105 1001h10m-5-5v10" stroke={BL} strokeWidth="1.6" />
  </BoardSvg>
);

/* ---------- data ---------- */
const layers = [['F.Cu', '#94150c'], ['B.Cu', '#149114'], ['F.Adhes', '#962896'], ['B.Adhes', '#061c91'], ['F.Paste', '#8c1111'], ['B.Paste', '#12b8b8'], ['F.SilkS', '#149a9a'], ['B.SilkS', '#962896'], ['F.Mask', '#962896'], ['B.Mask', '#96901c'], ['Dwgs.User', '#c8c8c8'], ['Cmts.User', '#061c91'], ['Eco1.User', '#149114'], ['Eco2.User', '#ccc627'], ['Edge.Cuts', '#ccc627'], ['Margin', '#962896'], ['F.CrtYd', '#848484'], ['B.CrtYd', '#ccc627'], ['F.Fab', '#ccc627'], ['B.Fab', '#94150c']];
const stats = [['Ilhas', '126', 108, '#005000'], ['Vias', '72', 104, '#005000'], ['Track Segments', '409', 230, '#005000'], ['Nós', '121', 104, '#00484a'], ['Ligações', '44', 154, '#8c0000'], ['Links', '78', 114, '#005000'], ['Connections', '77', 192, '#005000'], ['Não conectado', '1', 300, '#00008c']];
const messages = ['Compilar Interligação Local...', 'Isolamentos de ilha...', 'Isolamentos de trilha...', 'Preencher zonas...', 'Testar zonas...', 'Ilhas não conectadas...', 'Keepout areas ...', 'Test texts...', 'Concluiído'];
const fields = [['Isolamento', 'Por Classes de', '', true], ['Largura mínima de Trilha', '0,006', 'mm'], ['Tamanho min. de via', '0,0027', 'mm'], ['Tamanho mín. de Micro Via', '0,003', 'mm']];

const DrcDialog = () => (
  <Dialog>
    <DialogClip>
      <TitleBar>
        <Light $c="#fc605b" $b="#e2463f" /><Light /><Light $c="#34c84a" $b="#27aa35" />
        <WindowTitle $ls={0.25}>Controle DRC</WindowTitle>
      </TitleBar>
      <TopRow>
        <Options>
          <Caption $ls={0.2}>Opções</Caption>
          <GroupBox $h={436} $bg="#e2e2e2" $line="#d9d9d9" $pad="31px 0 0 0">
            {fields.map(([label, value, unit, off]) => (
              <Field key={label}>
                <FieldLabel>{label}</FieldLabel>
                <Input $w={198} $off={off} $m="0 25px 0 26px" $ls={off ? 0.3 : 0}>{value}</Input>
                <Unit>{unit}</Unit>
              </Field>
            ))}
            <SubGroup>
              <Caption $ls={0.4}>Criar arquivo de relatório</Caption>
              <GroupBox $h={94} $bg="#d9d9d9" $line="#cfcfcf" $pad="31px 0 0 41px">
                <Report>
                  <CheckBox />
                  <Input $w={411} $off $m="0 12px 0 33px" />
                  <Button $w={95} $k="dim">...</Button>
                </Report>
              </GroupBox>
            </SubGroup>
          </GroupBox>
        </Options>
        <Messages>
          <MessagesLabel>Mensagens :</MessagesLabel>
          <MessageList>{messages.map(m => <div key={m}>{m}</div>)}</MessageList>
        </Messages>
        <Actions>
          <Button $k="primary">Iniciar DRC</Button>
          <Button>Listar não conect.</Button>
          <Button>Deletar todos Marcadores</Button>
          <Button $k="off">Deletar marcador atual</Button>
        </Actions>
      </TopRow>
      <ErrorLabel>Mensagens de erro :</ErrorLabel>
      <Segments>
        <Segment $first $w={322} $k="primary" $ls={0.18}>Problems /Marcadores</Segment>
        <Segment $w={232} $ls={0.27}>Não conectado</Segment>
      </Segments>
      <ProblemsBox $h={220} $bg="#e2e2e2" $line="#d9d9d9" $pad="42px 14px 0 15px">
        <ProblemsList />
      </ProblemsBox>
      <Footer><Button $w={166}>Cancelar</Button><Button $w={166}>OK</Button></Footer>
    </DialogClip>
  </Dialog>
);

export default function App() {
  return (
    <Desktop>
      <Global />
      <Window>
        <TitleBar>
          <Light /><Light /><Light />
          <WindowTitle $ls={0.2}>Pcbnew 4.0.5 /Users/yvesbastos/Dropbox/Academico/2016-2/ECOM086 - Circuitos Impressos/ecom086/hw2/Arduino.kicad_pcb</WindowTitle>
        </TitleBar>
        <Toolbar $h={75} $pad="0 0 0 10px">
          <Tools list={mainTools} />
          <LayerField><LayerChip />B.Cu (PgDn)</LayerField>
          <DropButton><svg width="16" height="12" viewBox="0 0 16 12" fill="none" stroke="#444" strokeWidth="2.6" strokeLinecap="round"><path d="M2 2l6 7 6-7" /></svg></DropButton>
          <Tools list={modeTools} />
        </Toolbar>
        <Toolbar $h={76} $pad="2px 0 0 12px">
          <Picker $w={462} $mr={6} $ls={0.35}>Track: 0,006 mm (0,24 mils) *<UpDown /></Picker>
          <Picker $w={681} $mr={4} $ls={0.33}>Via: 0,00 mm (0,1 mils)/ 0,00 mm (0,1 mils) *<UpDown /></Picker>
          <VSep /><Slot>{icons.trackAuto}</Slot><VSep />
          <Picker $w={478} $mr={4} $ls={0.45}>Grid: 0,6350 mm (25,00 mils)<UpDown /></Picker>
          <VSep />
          <Picker $w={279} $ls={0.5}>Zoom 2,20<UpDown /></Picker>
        </Toolbar>
        <Body>
          <SideBar $w={76}><Tools list={leftTools} vertical /></SideBar>
          <Frame>
            <Board><BoardDrawing /></Board>
            <VTrack><Thumb $w={16} $h={760} /></VTrack>
            <HTrack><Thumb $w={1038} $h={16} /></HTrack>
          </Frame>
          <SideBar $w={78}><Tools list={rightTools} vertical /></SideBar>
          <PanelGap>
            <Panel>
              <PanelTitle>Visíveis</PanelTitle>
              <NoteBook>
                <TabStrip><Tab $on $w={94}>Camada</Tab><Tab $w={104}>Desenhar</Tab></TabStrip>
                <TabEdge />
                {layers.map(([name, color], i) => (
                  <LayerRow key={name}>
                    <Marker viewBox="0 0 16 28">{i === 1 && <><path d="M0 0 16 14H0z" fill="#9595ff" /><path d="M0 28 16 14H0z" fill="#1038ff" /></>}</Marker>
                    <Swatch $c={color} />
                    <Tick><svg width="18" height="20" viewBox="0 0 18 20" fill="none" stroke="#fff" strokeWidth="3" strokeLinecap="round" strokeLinejoin="round"><path d="M2 11l5 6L16 2" /></svg></Tick>
                    {name}
                  </LayerRow>
                ))}
              </NoteBook>
            </Panel>
          </PanelGap>
        </Body>
        <InfoPanel>{stats.map(([a, b, w, c]) => <Stat key={a} $w={w} $c={c}>{a}{'\n'}{b}</Stat>)}</InfoPanel>
        <StatusBar>
          <StatusCell $w={1244} $ls={0.2}>links 78 nc 0  net 3: not conn 0</StatusCell>
          <StatusCell $w={128} $ls={0.25}>Z 2,20</StatusCell>
          <StatusCell $w={376} $ls={0.22}>X 102,235000  Y 13,335000</StatusCell>
          <StatusCell $w={580} $ls={0.2}>dx 102,235000  dy 13,335000  dist 103,101</StatusCell>
          <StatusCell $w={80} $ls={0}>mm</StatusCell>
        </StatusBar>
      </Window>
      <DrcDialog />
    </Desktop>
  );
}
